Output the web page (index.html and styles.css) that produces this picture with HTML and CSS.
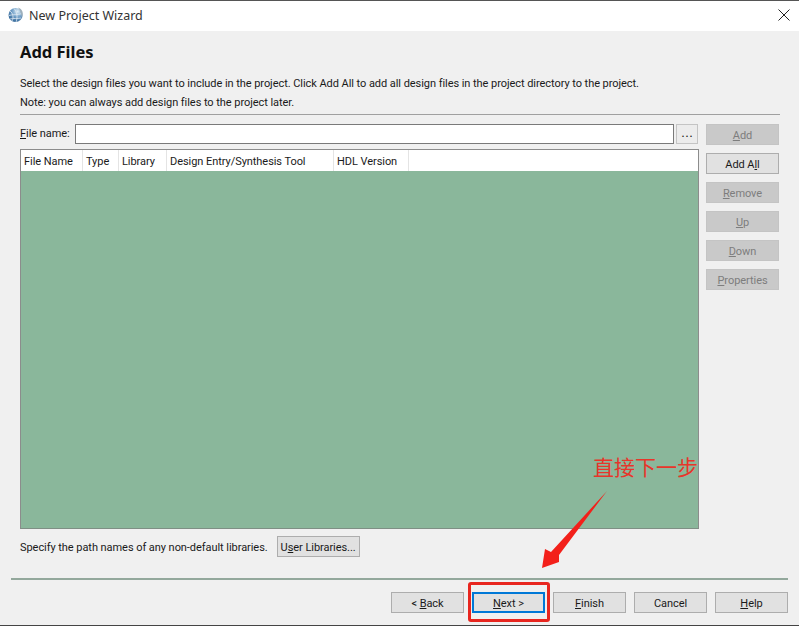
FILE: index.html
```html
<!DOCTYPE html>
<html lang="en">
<head>
<meta charset="utf-8">
<title>New Project Wizard</title>
<link rel="stylesheet" href="styles.css">
</head>
<body>
<div class="window">
  <header class="titlebar">
    <svg class="app-icon" width="16" height="16" viewBox="0 0 16 16">
      <defs><radialGradient id="g" cx="0.65" cy="0.25" r="0.9"><stop offset="0" stop-color="#dcecf6"/><stop offset="0.45" stop-color="#6f9ec6"/><stop offset="1" stop-color="#1f5488"/></radialGradient></defs>
      <circle cx="7.5" cy="8" r="7" fill="url(#g)"/>
      <path d="M2 4 C5 6 6 11 4 14 M6 1.500 C9 5 10 10 8 15 M1 8.500 C5 7 9 8.500 14 6.500 M2 12 C6 11 9 12 13 11" stroke="#dfeaf3" stroke-width=".8" fill="none"/>
      <path d="M10 0.500 C14.500 2 16 6 14 11 C13.500 7 12 3 10 0.500 Z" fill="#9fb0bc"/>
    </svg>
    <span class="title">New Project Wizard</span>
    <svg class="close" width="12" height="12" viewBox="0 0 12 12"><path d="M.5.5 11.500 11.500M11.500.5.5 11.500" stroke="#222" stroke-width="1" fill="none"/></svg>
  </header>
  <main class="body">
    <h1 class="heading">Add Files</h1>
    <p class="desc first">Select the design files you want to include in the project. Click Add All to add all design files in the project directory to the project.</p>
    <p class="desc">Note: you can always add design files to the project later.</p>
    <div class="rule"></div>
    <div class="workarea">
      <div class="left">
        <div class="file-row">
          <label class="file-label"><u>F</u>ile name:</label>
          <div class="file-input"></div>
          <div class="browse">...</div>
        </div>
        <div class="table">
          <div class="thead">
            <div class="th c1">File Name</div>
            <div class="th c2">Type</div>
            <div class="th c3">Library</div>
            <div class="th c4">Design Entry/Synthesis Tool</div>
            <div class="th c5">HDL Version</div>
            <div class="th-rest"></div>
          </div>
          <div class="tbody"></div>
        </div>
      </div>
      <div class="side">
        <div class="btn off"><u>A</u>dd</div>
        <div class="btn">Add A<u>l</u>l</div>
        <div class="btn off"><u>R</u>emove</div>
        <div class="btn off"><u>U</u>p</div>
        <div class="btn off"><u>D</u>own</div>
        <div class="btn off"><u>P</u>roperties</div>
      </div>
    </div>
    <div class="lib-row">
      <span>Specify the path names of any non-default libraries.</span>
      <div class="btn lib">U<u>s</u>er Libraries...</div>
    </div>
  </main>
  <div class="divider"></div>
  <footer class="actions">
    <div class="btn">&lt; <u>B</u>ack</div>
    <div class="btn primary"><u>N</u>ext &gt;</div>
    <div class="btn"><u>F</u>inish</div>
    <div class="btn">Cancel</div>
    <div class="btn"><u>H</u>elp</div>
  </footer>
  <div class="note">直接下一步</div>
  <svg class="arrow" width="799" height="626" viewBox="0 0 799 626"><polygon points="607,491 559,555 559,562 542,568 545,549 551,552" fill="#f3201a"/></svg>
  <div class="redbox"></div>
</div>
</body>
</html>
```
FILE: styles.css
```css
* { box-sizing: border-box; }
html, body { margin: 0; padding: 0; }
body {
  width: 799px;
  height: 626px;
  overflow: hidden;
  font-family: Roboto, "Noto Sans CJK SC", sans-serif;
  font-size: 11px;
  letter-spacing: -0.055px;
  color: #1a1a1a;
}
.window {
  position: relative;
  width: 799px;
  height: 626px;
  background: #f0f0f0;
  border-top: 1px solid #555;
  border-bottom: 1px solid #444;
  display: flex;
  flex-direction: column;
}
.titlebar {
  height: 30px;
  background: #fff;
  display: flex;
  align-items: center;
  padding: 0 9px 2px 8px;
  flex: none;
}
.app-icon { flex: none; margin-right: 5px; }
.title { font-size: 12.500px; color: #333; flex: 1; font-family: "Noto Sans", sans-serif; letter-spacing: 0; }
.body { padding: 0 19px 0 20px; flex: none; height: 547px; }
.heading { margin: 10px 0 0; font-size: 16.500px; line-height: 22px; font-weight: 700; color: #111; font-family: "Noto Sans", sans-serif; letter-spacing: 0; }
.desc { margin: 0; line-height: 19px; height: 19px; white-space: nowrap; }
.desc.first { margin-top: 11px; }
.rule { height: 1px; background: #a0a0a0; margin-top: 2px; }
.workarea { display: flex; gap: 7px; margin-top: 8px; }
.left { width: 679px; flex: none; }
.file-row { display: flex; align-items: center; height: 21px; width: 678px; }
.file-label { width: 55px; flex: none; }
.file-input { flex: 1; height: 20px; background: #fff; border: 1px solid #7a7a7a; }
.browse { width: 22px; height: 20px; margin-left: 2px; flex: none; background: #ececec; border: 1px solid #c4c4c4; text-align: center; line-height: 18px; letter-spacing: 1px; padding-left: 1px; font-weight: 500; }
.table { margin-top: 5px; height: 380px; border: 1px solid #8c8c8c; border-bottom-color: #7f8f85; display: flex; flex-direction: column; }
.thead { display: flex; height: 21px; background: #fff; flex: none; }
.th { padding: 1px 0 0 3px; line-height: 21px; border-right: 1px solid #e4e4e4; white-space: nowrap; flex: none; }
.c1 { width: 62px; }
.c2 { width: 36px; }
.c3 { width: 48px; }
.c4 { width: 167px; }
.c5 { width: 75px; }
.th-rest { flex: 1; }
.tbody { flex: 1; background: #8ab79b; }
.side { display: flex; flex-direction: column; gap: 8px; margin-top: 1px; }
.btn {
  width: 73px;
  height: 21px;
  flex: none;
  background: #e1e1e1;
  border: 1px solid #adadad;
  text-align: center;
  line-height: 21px;
  white-space: nowrap;
}
.btn.off { background: #c9c9c9; border-color: #c4c4c4; color: #7d7d7d; }
.lib-row { display: flex; align-items: center; gap: 9px; margin-top: 7px; height: 21px; }
.lib-row span { padding-top: 2px; }
.btn.lib { width: 83px; }
.divider { height: 2px; margin: 0 11px 0 11px; background: #93a89c; flex: none; }
.actions { display: flex; justify-content: flex-end; gap: 8px; padding: 12px 11px 0 0; flex: none; }
.btn.primary { border: 2px solid #0078d7; line-height: 19px; }
.note { position: absolute; left: 593px; top: 452px; font-size: 21px; line-height: 26px; color: #e8352a; font-family: "Noto Sans CJK SC", sans-serif; white-space: nowrap; letter-spacing: 0; }
.arrow { position: absolute; left: 0; top: -1px; pointer-events: none; }
.redbox { position: absolute; left: 468px; top: 581px; width: 82px; height: 40px; border: 3px solid #e8261f; border-radius: 3px; }
```
